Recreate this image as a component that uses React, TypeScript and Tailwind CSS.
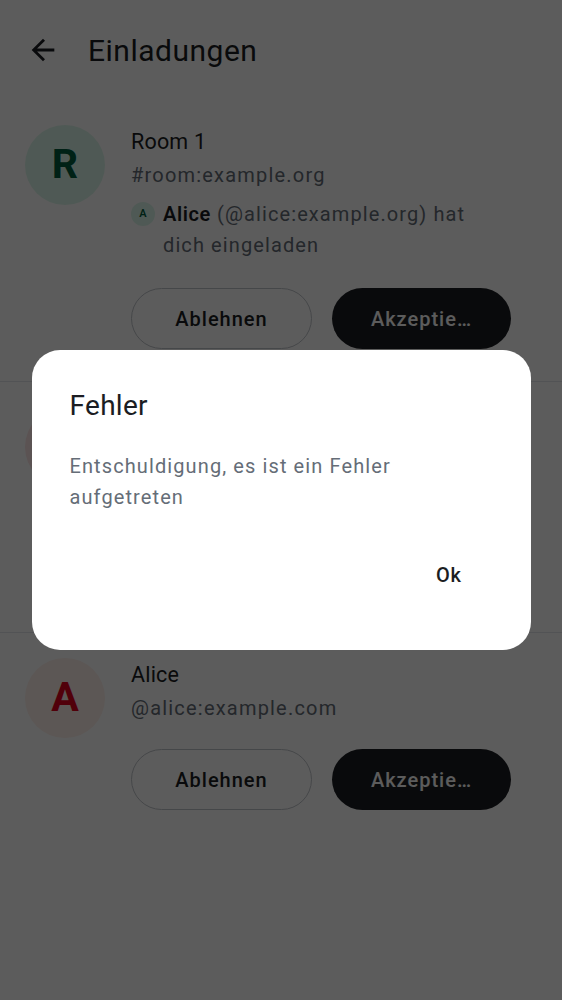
const invites = [
  {
    letter: "R",
    name: "Room 1",
    alias: "#room:example.org",
    avatarBg: "bg-[#dcf7ea]",
    avatarFg: "text-[#005c3d]",
    inviter: { name: "Alice", text: "(@alice:example.org) hat dich eingeladen" },
  },
  {
    letter: "B",
    name: "Bob",
    alias: "@bob:example.com",
    avatarBg: "bg-[#fde6e6]",
    avatarFg: "text-[#c8002e]",
    inviter: { name: "Bob", text: "hat dich eingeladen" },
  },
  {
    letter: "A",
    name: "Alice",
    alias: "@alice:example.com",
    avatarBg: "bg-[#fff0ea]",
    avatarFg: "text-[#e0001c]",
    inviter: null,
  },
];

type Invite = (typeof invites)[number];

const ArrowBack = () => (
  <svg viewBox="0 0 24 24" className="w-[34px] h-[34px]" fill="#1b1d22">
    <path d="M20 11H7.83l5.59-5.59L12 4l-8 8 8 8 1.41-1.41L7.83 13H20v-2z" />
  </svg>
);

const InviteRow = ({ data, last }: { data: Invite; last: boolean }) => {
  const { letter, name, alias, avatarBg, avatarFg, inviter } = data;
  return (
    <div className={`flex gap-[26px] pl-[25px] pr-[51px] pt-[25px] pb-[32px] ${last ? "" : "border-b border-[#e3e6ea]"}`}>
      <div className={`w-[80px] h-[80px] shrink-0 rounded-full flex items-center justify-center text-[41px] font-bold ${avatarBg} ${avatarFg}`}>
        {letter}
      </div>
      <div className="flex-1 flex flex-col">
        <p className="mt-[2px] text-[21.5px] leading-[30px] tracking-[0.2px] text-[#1b1d22]">{name}</p>
        <p className="mt-[3px] text-[20px] leading-[30px] tracking-[1.2px] text-[#656d77]">{alias}</p>
        {inviter && (
          <div className="mt-[9px] flex gap-[8px]">
            <div className={`mt-[3px] w-[24px] h-[24px] shrink-0 rounded-full flex items-center justify-center text-[11px] font-semibold ${avatarBg} ${avatarFg}`}>
              {inviter.name[0]}
            </div>
            <p className="text-[20px] leading-[31px] tracking-[1.1px] text-[#656d77]">
              <span className="font-semibold tracking-[0.6px] text-[#1b1d22]">{inviter.name}</span> {inviter.text}
            </p>
          </div>
        )}
        <div className={`${inviter ? "mt-[27px]" : "mt-[26px]"} flex gap-[20px]`}>
          <button className="flex-1 h-[61px] rounded-full border border-[#c0c4ca] text-[20px] font-medium tracking-[1px] text-[#1b1d22]">
            Ablehnen
          </button>
          <button className="flex-1 h-[61px] rounded-full bg-[#1b1d22] text-[20px] font-medium tracking-[1px] text-white">
            Akzeptie…
          </button>
        </div>
      </div>
    </div>
  );
};

const App = () => {
  return (
    <div className="min-h-screen bg-white font-['Roboto',sans-serif]">
      <div className="h-[100px] flex items-center pl-[26px]">
        <ArrowBack />
        <h1 className="ml-[28px] text-[30px] tracking-[0.5px] text-[#1b1d22]">Einladungen</h1>
      </div>
      <div className="flex flex-col">
        {invites.map((invite, index) => (
          <InviteRow data={invite} last={index === invites.length - 1} key={index} />
        ))}
      </div>

      <div className="fixed inset-0 bg-black/[0.64] flex items-center justify-center">
        <div className="w-[499px] bg-white rounded-[28px] px-[38px] pt-[38px] pb-[51px]">
          <h2 className="text-[28px] leading-[36px] tracking-[0.3px] text-[#1b1d22]">Fehler</h2>
          <p className="mt-[27px] text-[20px] leading-[31px] tracking-[1.1px] text-[#656d77]">
            Entschuldigung, es ist ein Fehler aufgetreten
          </p>
          <div className="mt-[38px] h-[48px] flex justify-end mr-[15px]">
            <button className="px-[16px] text-[20px] font-medium tracking-[0.6px] text-[#1b1d22]">Ok</button>
          </div>
        </div>
      </div>
    </div>
  );
};

export default App;
